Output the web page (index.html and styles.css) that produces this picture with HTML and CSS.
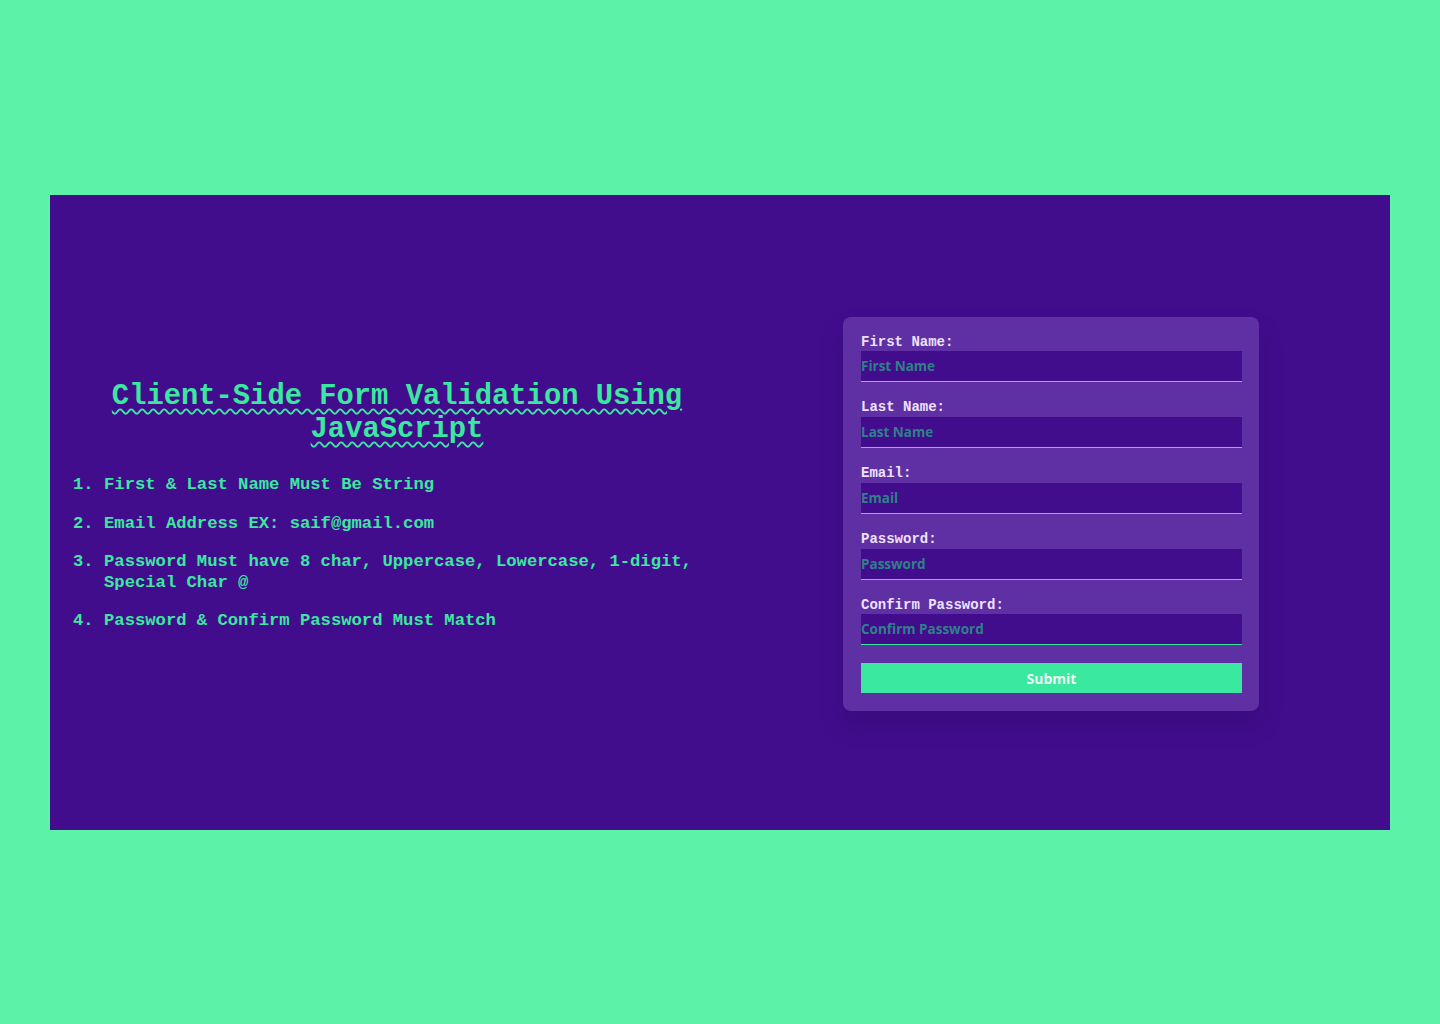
FILE: index.html
```html
<!DOCTYPE html>
<html lang="en">
<head>
<meta charset="UTF-8">
<title>Client-Side Form Validation Using JavaScript</title>
<link rel="stylesheet" href="styles.css">
</head>
<body>
<main class="container">
  <section class="info">
    <h1 class="title">Client-Side Form Validation Using JavaScript</h1>
    <ol class="rules">
      <li>First &amp; Last Name Must Be String</li>
      <li>Email Address EX: saif@gmail.com</li>
      <li>Password Must have 8 char, Uppercase, Lowercase, 1-digit, Special Char @</li>
      <li>Password &amp; Confirm Password Must Match</li>
    </ol>
  </section>
  <form class="card">
    <div class="field">
      <label for="fname">First Name:</label>
      <input id="fname" type="text" placeholder="First Name">
    </div>
    <div class="field">
      <label for="lname">Last Name:</label>
      <input id="lname" type="text" placeholder="Last Name">
    </div>
    <div class="field">
      <label for="email">Email:</label>
      <input id="email" type="text" placeholder="Email">
    </div>
    <div class="field">
      <label for="pass">Password:</label>
      <input id="pass" type="password" placeholder="Password">
    </div>
    <div class="field">
      <label for="cpass">Confirm Password:</label>
      <input id="cpass" type="password" placeholder="Confirm Password">
    </div>
    <button class="submit" type="button">Submit</button>
  </form>
</main>
</body>
</html>
```
FILE: styles.css
```css
* { box-sizing: border-box; }
html, body { margin: 0; padding: 0; }
body {
  background: #5cf2a8;
  height: 1024px;
  display: flex;
  align-items: center;
  justify-content: center;
  font-family: "Liberation Mono", monospace;
}
.container {
  width: 1340px;
  height: 635px;
  background: #420d8d;
  display: flex;
  align-items: center;
}
.info {
  width: 648px;
  margin-left: 23px;
  padding-bottom: 12px;
  color: #3be8a0;
}
.title {
  margin: 0 0 29px;
  text-align: center;
  font-size: 28.8px;
  line-height: 33px;
  font-weight: bold;
  text-decoration: underline wavy #3be8a0;
  text-decoration-thickness: 2px;
  text-underline-offset: 4px;
}
.rules {
  margin: 0;
  padding-left: 31px;
  font-size: 17.2px;
  line-height: 20.5px;
  font-weight: bold;
}
.rules li { margin-bottom: 18px; }
.rules li:last-child { margin-bottom: 0; }
.card {
  margin-left: 122px;
  margin-top: 4px;
  width: 416px;
  background: #5e30a3;
  border-radius: 8px;
  padding: 18px 17px 18px 18px;
  box-shadow: 0 14px 24px rgba(20, 0, 60, 0.18);
}
.field { margin-bottom: 18px; }
.field label {
  display: block;
  color: #eee3ff;
  font-size: 14px;
  line-height: 15.75px;
  font-weight: bold;
  margin-bottom: 1px;
}
.field input {
  display: block;
  width: 100%;
  height: 31px;
  background: #420d8d;
  border: none;
  border-bottom: 1px solid #3be8a0;
  padding: 0;
  color: #eee3ff;
  font-family: "Open Sans", sans-serif;
  font-weight: 700;
  font-size: 13.5px;
  outline: none;
}
.field input::placeholder { color: #2f8189; opacity: 1; }
.submit {
  display: block;
  width: 100%;
  height: 30px;
  border: none;
  background: #3be8a0;
  color: #eef8f2;
  font-family: "Open Sans", sans-serif;
  font-weight: 700;
  font-size: 14px;
  cursor: pointer;
}
```
